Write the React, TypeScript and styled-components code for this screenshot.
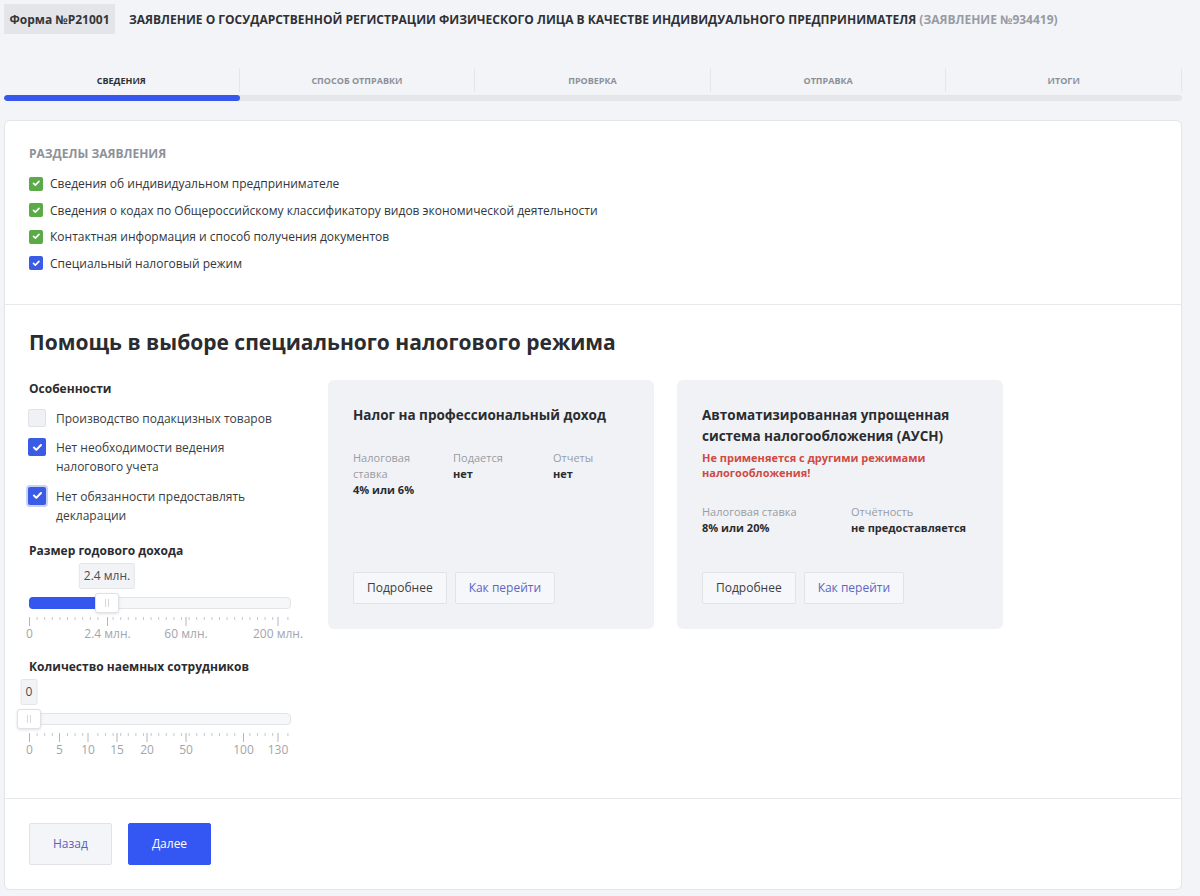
import React from "react";
import styled, { createGlobalStyle, css } from "styled-components";

const GlobalStyle = createGlobalStyle`
  * { box-sizing: border-box; }
  body {
    margin: 0;
    background: #f3f4f8;
    font-family: "Open Sans", "Noto Sans", sans-serif;
    color: #2e3033;
  }
`;

const Page = styled.div`
  padding: 4px 18px 7px 4px;
`;

const Header = styled.div`
  display: flex;
  align-items: center;
  gap: 14px;
`;

const FormBadge = styled.div`
  background: #e3e5e9;
  height: 30px;
  width: 111px;
  display: flex;
  align-items: center;
  justify-content: center;
  font-size: 12px;
  font-weight: 700;
  color: #33363a;
`;

const Title = styled.div`
  font-size: 12px;
  font-weight: 700;
  text-transform: uppercase;
  color: #2e3033;
`;

const TitleNote = styled.span`
  color: #979ba2;
`;

const Tabs = styled.div`
  margin-top: 34px;
  display: grid;
  grid-template-columns: repeat(5, 1fr);
`;

const Tab = styled.div<{ $active?: boolean }>`
  height: 24px;
  display: flex;
  align-items: center;
  justify-content: center;
  font-size: 9px;
  font-weight: 700;
  text-transform: uppercase;
  color: ${(p) => (p.$active ? "#2e3033" : "#8c9097")};
  border-right: 1px solid #e4e6ea;
`;

const Progress = styled.div`
  margin-top: 3px;
  height: 6px;
  border-radius: 3px;
  background: #e4e6ea;
  overflow: hidden;
`;

const ProgressFill = styled.div`
  height: 100%;
  border-radius: 3px;
`;

const MainCard = styled.div`
  margin-top: 19px;
  background: #fff;
  border: 1px solid #e3e5e9;
  border-radius: 6px;
`;

const Section = styled.div<{ $pad: string }>`
  padding: ${(p) => p.$pad};
  border-bottom: 1px solid #e6e8ec;
  &:last-child { border-bottom: 0; }
`;

const SectionCaption = styled.div`
  font-size: 12px;
  font-weight: 700;
  line-height: 18px;
  text-transform: uppercase;
  color: #8d9198;
`;

const Checklist = styled.div`
  margin-top: 11px;
  display: flex;
  flex-direction: column;
  gap: 7.5px;
`;

const CheckRow = styled.div`
  display: flex;
  align-items: center;
  gap: 7px;
  font-size: 12px;
  line-height: 19px;
  color: #33363a;
`;

const Box = styled.span<{ $color?: string; $size: number; $focus?: boolean }>`
  flex: none;
  width: ${(p) => p.$size}px;
  height: ${(p) => p.$size}px;
  border-radius: 2px;
  display: inline-flex;
  align-items: center;
  justify-content: center;
  ${(p) =>
    p.$color
      ? css`background: ${p.$color};`
      : css`background: #eff1f5; border: 1px solid #e0e2e7;`}
  ${(p) => p.$focus && css`box-shadow: 0 0 0 2px #c9d3f7;`}
`;

const Check = ({ size }: { size: number }) => (
  <svg width={size * 0.6} height={size * 0.6} viewBox="0 0 10 10">
    <path d="M1.8 5.2 L4 7.3 L8.3 2.8" fill="none" stroke="#fff" strokeWidth="1.9" strokeLinecap="round" strokeLinejoin="round" />
  </svg>
);

const Heading = styled.h2`
  margin: 0;
  font-size: 21px;
  line-height: 28px;
  font-weight: 700;
  color: #2a2c30;
`;

const HelpGrid = styled.div`
  margin-top: 24px;
  display: flex;
  align-items: flex-start;
  gap: 37px;
`;

const Features = styled.div`
  width: 262px;
  flex: none;
`;

const Label = styled.div`
  font-size: 12px;
  font-weight: 700;
  line-height: 18px;
  color: #2a2c30;
`;

const FeatureList = styled.div`
  margin-top: 11px;
  display: flex;
  flex-direction: column;
  gap: 10.5px;
`;

const FeatureRow = styled.div`
  display: flex;
  align-items: flex-start;
  gap: 10px;
  margin-left: -1px;
  font-size: 12px;
  line-height: 19px;
  color: #3a3d42;
`;

const SliderBlock = styled.div<{ $top: number }>`
  margin-top: ${(p) => p.$top}px;
`;

const SliderArea = styled.div`
  position: relative;
  margin-top: 3px;
  padding-top: 34px;
`;

const Bubble = styled.div`
  position: absolute;
  top: 0;
  transform: translateX(-50%);
  height: 26px;
  padding: 0 4px;
  display: flex;
  align-items: center;
  background: #f2f3f6;
  border: 1px solid #e4e6ea;
  border-radius: 2px;
  font-size: 12px;
  color: #4a4d52;
  white-space: nowrap;
`;

const Track = styled.div`
  position: relative;
  height: 12px;
  border-radius: 4px;
  background: #f6f7f9;
  border: 1px solid #e2e4e8;
`;

const TrackFill = styled.div`
  position: absolute;
  left: -1px;
  top: -1px;
  bottom: -1px;
  background: #3557ee;
  border-radius: 4px 0 0 4px;
`;

const Handle = styled.div`
  position: absolute;
  top: -5px;
  width: 24px;
  height: 20px;
  transform: translateX(-50%);
  background: #fff;
  border: 1px solid #dfe1e6;
  border-radius: 3px;
  box-shadow: 0 1px 3px rgba(0, 0, 0, 0.12);
  display: flex;
  align-items: center;
  justify-content: center;
  gap: 2px;
  &::before, &::after {
    content: "";
    width: 1px;
    height: 8px;
    background: #d6d8dd;
  }
`;

const Scale = styled.svg`
  display: block;
  margin-top: 8px;
  overflow: visible;
`;

const ScaleLabels = styled.div`
  position: relative;
  height: 16px;
`;

const ScaleLabel = styled.span`
  position: absolute;
  top: 0;
  transform: translateX(-50%);
  font-size: 12px;
  line-height: 16px;
  color: #a2a5ab;
  white-space: nowrap;
`;

type Mark = { at: number; text: string };

function Slider({ label, top, value, bubble, marks, fill }: {
  label: string; top: number; value: number; bubble: string; marks: Mark[]; fill?: boolean;
}) {
  const width = 262;
  const minor: number[] = [];
  for (let x = 0; x <= width + 0.1; x += 7.6) {
    if (!marks.some((m) => Math.abs(m.at - x) < 3)) minor.push(x);
  }
  return (
    <SliderBlock $top={top}>
      <Label>{label}</Label>
      <SliderArea>
        <Bubble style={{ left: value }}>{bubble}</Bubble>
        <Track>
          {fill && <TrackFill style={{ width: value }} />}
          <Handle style={{ left: value - 1 }} />
        </Track>
      </SliderArea>
      <Scale width={width} height={9}>
        {minor.map((x) => (
          <line key={"m" + x} x1={x + 0.5} x2={x + 0.5} y1={0} y2={3} stroke="#c5c8cd" strokeWidth={1} />
        ))}
        {marks.map((m) => (
          <line key={"M" + m.at} x1={m.at + 0.5} x2={m.at + 0.5} y1={0} y2={9} stroke="#b3b6bc" strokeWidth={1} />
        ))}
      </Scale>
      <ScaleLabels>
        {marks.map((m) => (
          <ScaleLabel key={m.text} style={{ left: m.at + 0.5 }}>{m.text}</ScaleLabel>
        ))}
      </ScaleLabels>
    </SliderBlock>
  );
}

const RegimeCard = styled.div`
  width: 326px;
  height: 249px;
  flex: none;
  background: #f1f2f6;
  border-radius: 6px;
  padding: 25px 25px 25px;
  display: flex;
  flex-direction: column;
`;

const CardTitle = styled.div`
  font-size: 13.5px;
  font-weight: 700;
  line-height: 21px;
  color: #2a2c30;
`;

const Warning = styled.div`
  margin-top: 3px;
  font-size: 11px;
  font-weight: 700;
  line-height: 15px;
  color: #cf4a43;
`;

const Facts = styled.div<{ $cols: string }>`
  margin-top: 24px;
  display: grid;
  grid-template-columns: ${(p) => p.$cols};
  font-size: 11px;
  line-height: 16px;
`;

const Fact = styled.div`
  padding-right: 15px;
`;

const FactName = styled.div`
  color: #989ca3;
`;

const FactValue = styled.div`
  font-weight: 700;
  color: #2a2c30;
`;

const CardActions = styled.div`
  margin-top: auto;
  display: flex;
  gap: 8px;
`;

const GhostButton = styled.button<{ $link?: boolean }>`
  height: 32px;
  padding: 0 13px;
  background: #f6f7fa;
  border: 1px solid #e1e3e8;
  border-radius: 2px;
  font-family: inherit;
  font-size: 12px;
  color: ${(p) => (p.$link ? "#5c66c2" : "#3a3d42")};
`;

const Footer = styled.div`
  display: flex;
  gap: 16px;
`;

const NavButton = styled.button<{ $primary?: boolean }>`
  height: 42px;
  padding: 0 23px;
  border-radius: 2px;
  font-family: inherit;
  font-size: 12px;
  ${(p) =>
    p.$primary
      ? css`background: #3456f2; border: 1px solid #3456f2; color: #fff;`
      : css`background: #f4f5f9; border: 1px solid #e1e3e9; color: #5b63b8;`}
`;

const tabs = ["Сведения", "Способ отправки", "Проверка", "Отправка", "Итоги"];

const sections = [
  { text: "Сведения об индивидуальном предпринимателе", color: "#5aab47" },
  { text: "Сведения о кодах по Общероссийскому классификатору видов экономической деятельности", color: "#5aab47" },
  { text: "Контактная информация и способ получения документов", color: "#5aab47" },
  { text: "Специальный налоговый режим", color: "#3a5be6" },
];

const incomeMarks: Mark[] = [
  { at: 0, text: "0" },
  { at: 78, text: "2.4 млн." },
  { at: 156.5, text: "60 млн." },
  { at: 248.5, text: "200 млн." },
];

const staffMarks: Mark[] = [
  { at: 0, text: "0" },
  { at: 30, text: "5" },
  { at: 58.5, text: "10" },
  { at: 87.5, text: "15" },
  { at: 117.5, text: "20" },
  { at: 156.5, text: "50" },
  { at: 214, text: "100" },
  { at: 248.5, text: "130" },
];

export default function App() {
  return (
    <Page>
      <GlobalStyle />
      <Header>
        <FormBadge>Форма №P21001</FormBadge>
        <Title>
          Заявление о государственной регистрации физического лица в качестве индивидуального предпринимателя{" "}
          <TitleNote>(Заявление №934419)</TitleNote>
        </Title>
      </Header>

      <Tabs>
        {tabs.map((t, i) => (
          <Tab key={t} $active={i === 0}>{t}</Tab>
        ))}
      </Tabs>
      <Progress>
        <ProgressFill style={{ width: "20%", background: "#3557ee" }} />
      </Progress>

      <MainCard>
        <Section $pad="24px 24px 31px">
          <SectionCaption>Разделы заявления</SectionCaption>
          <Checklist>
            {sections.map((s) => (
              <CheckRow key={s.text}>
                <Box $size={14} $color={s.color}><Check size={14} /></Box>
                {s.text}
              </CheckRow>
            ))}
          </Checklist>
        </Section>

        <Section $pad="23px 24px 40px">
          <Heading>Помощь в выборе специального налогового режима</Heading>
          <HelpGrid>
            <Features>
              <Label>Особенности</Label>
              <FeatureList>
                <FeatureRow>
                  <Box $size={18} />
                  <span>Производство подакцизных товаров</span>
                </FeatureRow>
                <FeatureRow>
                  <Box $size={18} $color="#3a5be6"><Check size={18} /></Box>
                  <span>Нет необходимости ведения налогового учета</span>
                </FeatureRow>
                <FeatureRow>
                  <Box $size={18} $color="#3a5be6" $focus><Check size={18} /></Box>
                  <span>Нет обязанности предоставлять декларации</span>
                </FeatureRow>
              </FeatureList>

              <Slider label="Размер годового дохода" top={17} value={78} bubble="2.4 млн." marks={incomeMarks} fill />
              <Slider label="Количество наемных сотрудников" top={16} value={0} bubble="0" marks={staffMarks} />
            </Features>

            <RegimeCard>
              <CardTitle>Налог на профессиональный доход</CardTitle>
              <Facts $cols="100px 100px 100px">
                <Fact>
                  <FactName>Налоговая ставка</FactName>
                  <FactValue>4% или 6%</FactValue>
                </Fact>
                <Fact>
                  <FactName>Подается</FactName>
                  <FactValue>нет</FactValue>
                </Fact>
                <Fact>
                  <FactName>Отчеты</FactName>
                  <FactValue>нет</FactValue>
                </Fact>
              </Facts>
              <CardActions>
                <GhostButton>Подробнее</GhostButton>
                <GhostButton $link>Как перейти</GhostButton>
              </CardActions>
            </RegimeCard>

            <RegimeCard style={{ marginLeft: -14 }}>
              <CardTitle>Автоматизированная упрощенная система налогообложения (АУСН)</CardTitle>
              <Warning>Не применяется с другими режимами налогообложения!</Warning>
              <Facts $cols="149px 149px">
                <Fact>
                  <FactName>Налоговая ставка</FactName>
                  <FactValue>8% или 20%</FactValue>
                </Fact>
                <Fact>
                  <FactName>Отчётность</FactName>
                  <FactValue>не предоставляется</FactValue>
                </Fact>
              </Facts>
              <CardActions>
                <GhostButton>Подробнее</GhostButton>
                <GhostButton $link>Как перейти</GhostButton>
              </CardActions>
            </RegimeCard>
          </HelpGrid>
        </Section>

        <Section $pad="24px 24px 24px">
          <Footer>
            <NavButton>Назад</NavButton>
            <NavButton $primary>Далее</NavButton>
          </Footer>
        </Section>
      </MainCard>
    </Page>
  );
}
